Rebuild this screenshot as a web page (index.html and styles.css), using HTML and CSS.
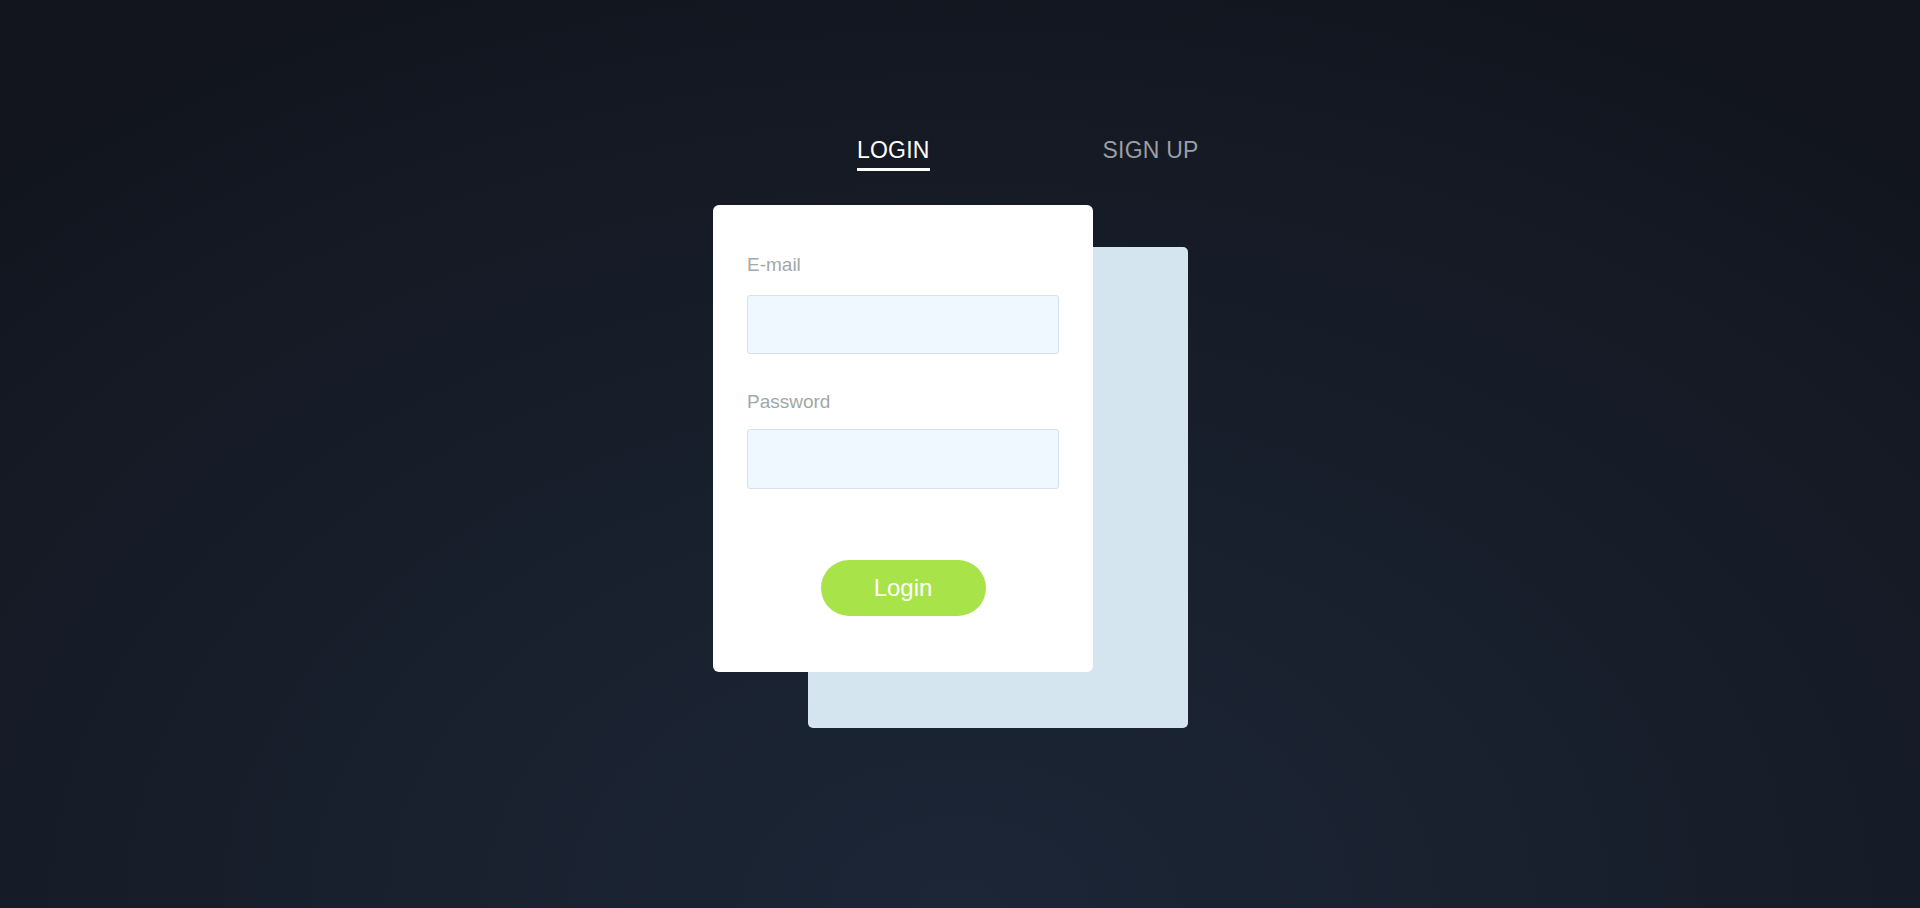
FILE: index.html
```html
<!DOCTYPE html>
<html>
<head>
<meta charset="utf-8">
<meta name="viewport" content="width=device-width, initial-scale=1.0">
<title>Login</title>
<link rel="stylesheet" href="styles.css">
</head>
<body>
<div class="stage">
    <nav class="tabs">
        <a class="tab active" href="#">LOGIN</a>
        <a class="tab" href="#">SIGN UP</a>
    </nav>
    <div class="deck">
        <div class="card-back"></div>
        <form class="card">
            <label class="field-label" for="email">E-mail</label>
            <input class="field" id="email" type="text">
            <label class="field-label second" for="password">Password</label>
            <input class="field second" id="password" type="password">
            <button class="btn" type="button">Login</button>
        </form>
    </div>
</div>
</body>
</html>
```

FILE: styles.css
```css
html, body {
    height: 100%;
}

body {
    margin: 0;
    padding-top: 137px;
    box-sizing: border-box;
    font-family: "Liberation Sans", Arial, sans-serif;
    background: radial-gradient(ellipse 75% 110% at 50% 100%, #1c2636 0%, #171e2a 55%, #12151e 100%);
    background-color: #12151e;
    overflow: hidden;
}

.stage {
    width: 475px;
    margin-left: calc(50% - 247px);
}

.tabs {
    display: flex;
    gap: 173px;
    padding-left: 144px;
    white-space: nowrap;
}

.tab {
    flex-shrink: 0;
    font-size: 23px;
    line-height: 26px;
    letter-spacing: 0.2px;
    color: #9a9ea5;
    text-decoration: none;
    padding-bottom: 5px;
    border-bottom: 3px solid transparent;
}

.tab.active {
    color: #fff;
    border-bottom-color: #fff;
}

.deck {
    position: relative;
    margin-top: 34px;
    height: 523px;
}

.card-back {
    position: absolute;
    left: 95px;
    top: 42px;
    width: 380px;
    height: 481px;
    background: #d5e5f0;
    border-radius: 5px;
}

.card {
    position: relative;
    display: flex;
    flex-direction: column;
    width: 380px;
    box-sizing: border-box;
    padding: 49px 34px 56px;
    background: #fff;
    border-radius: 6px;
}

.field-label {
    font-size: 19px;
    line-height: 22px;
    color: #9fa9a8;
}

.field-label.second {
    margin-top: 37px;
}

.field {
    margin-top: 19px;
    height: 59px;
    box-sizing: border-box;
    background: #eff8fe;
    border: 1px solid #d3e2ee;
    border-radius: 3px;
    outline: none;
}

.field.second {
    margin-top: 16px;
    height: 60px;
}

.btn {
    align-self: center;
    margin-top: 71px;
    width: 165px;
    height: 56px;
    border: none;
    border-radius: 28px;
    background: #a8e34a;
    color: #fff;
    font-family: inherit;
    font-size: 24px;
    cursor: pointer;
}
```
